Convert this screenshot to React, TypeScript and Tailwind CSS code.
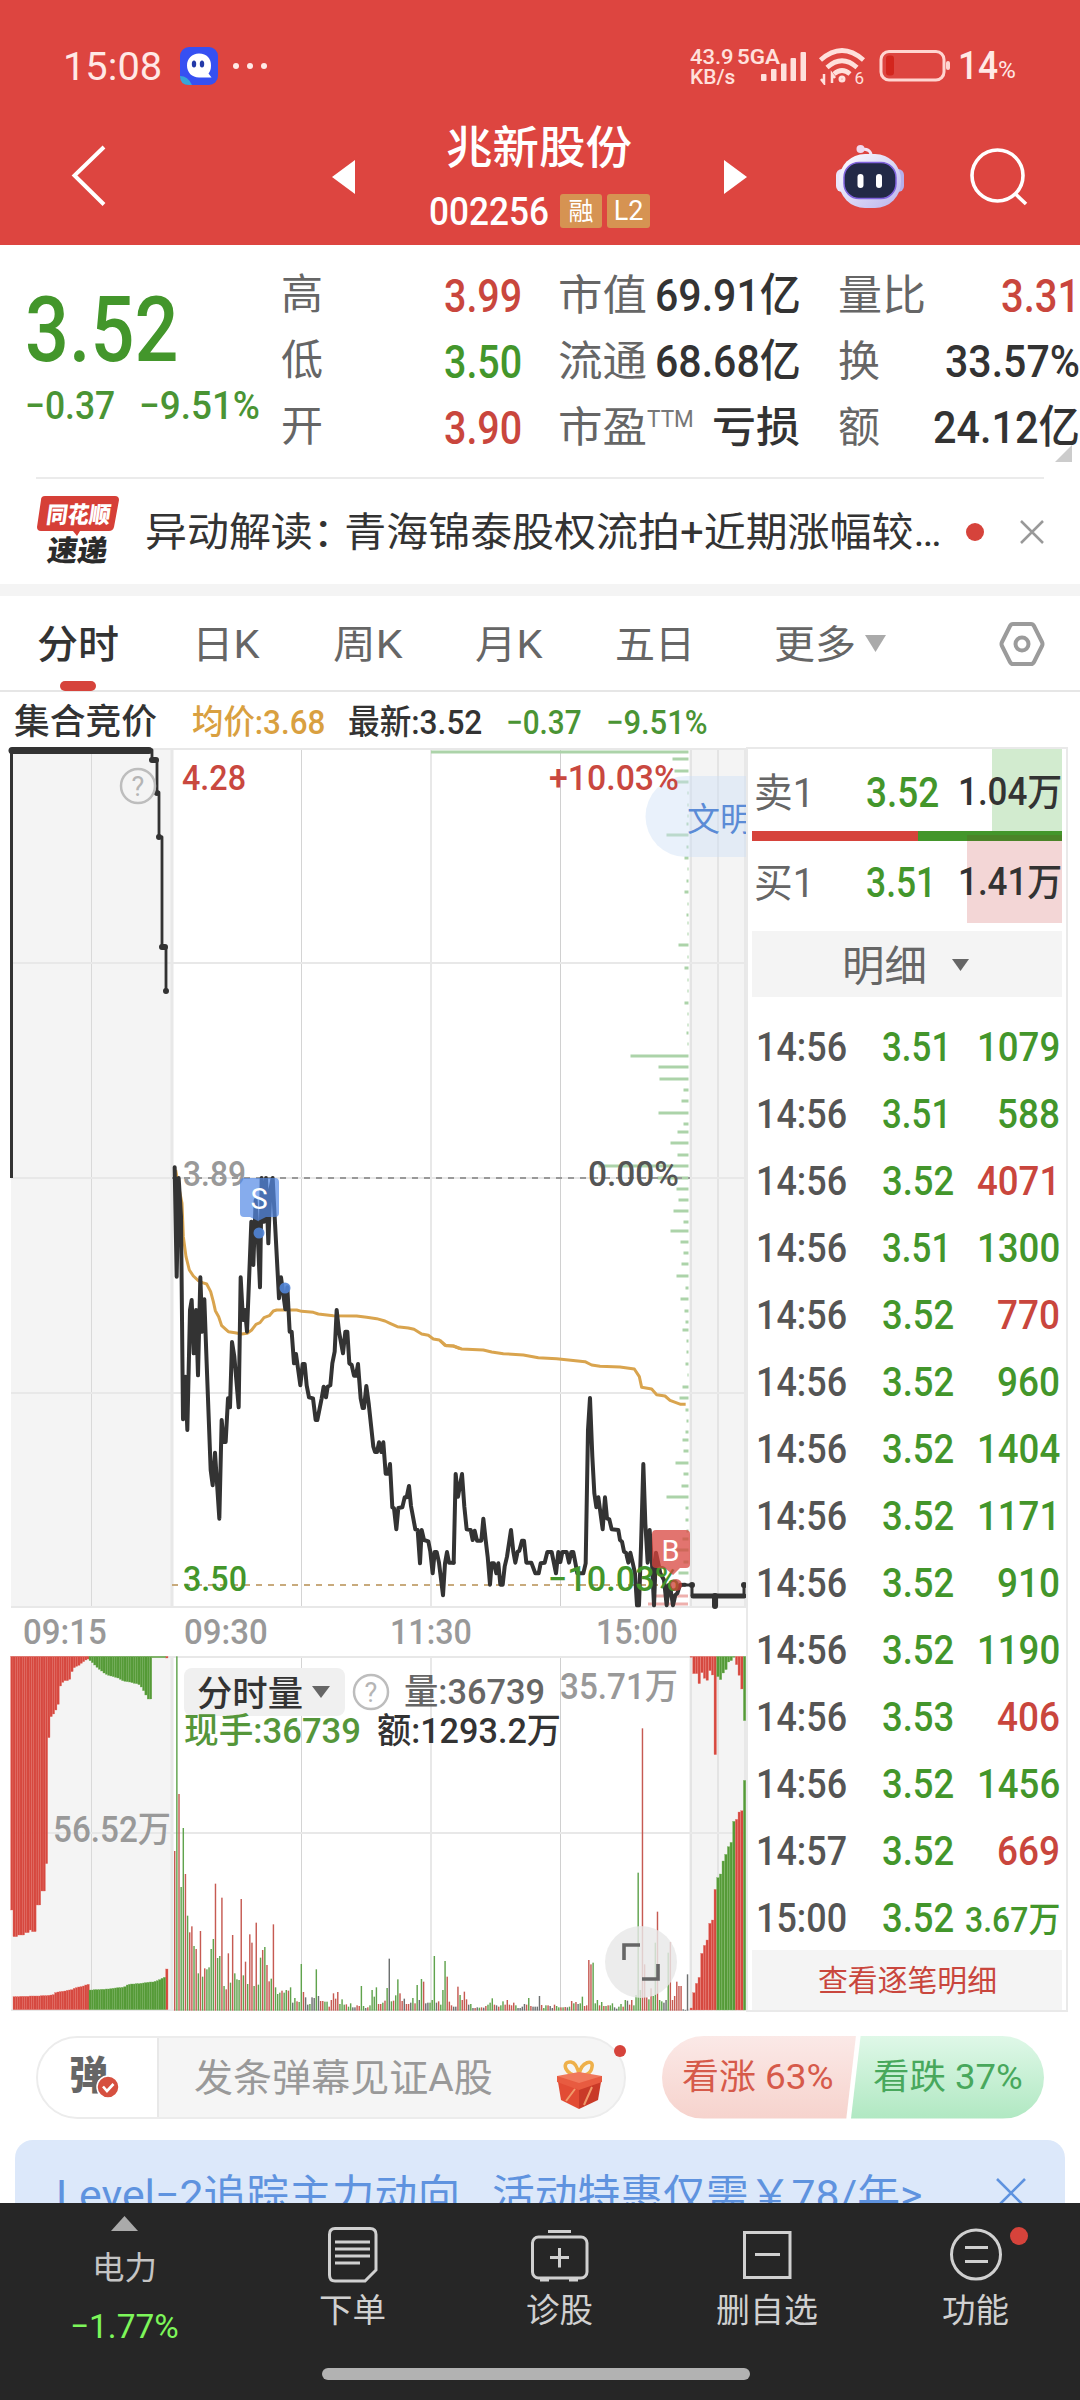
import { useLayoutEffect, useRef, type ReactNode } from "react";

/* Text condensed or widened horizontally so that it fills its own box. */
function Fit({ className, children }: { className: string; children: ReactNode }) {
  const outer = useRef<HTMLSpanElement>(null);
  const inner = useRef<HTMLSpanElement>(null);
  useLayoutEffect(() => {
    const o = outer.current;
    const i = inner.current;
    if (!o || !i) return;
    i.style.transform = `scaleX(${o.clientWidth / i.offsetWidth})`;
  }, []);
  return (
    <span ref={outer} className={`flex shrink-0 items-center whitespace-nowrap pt-[2px] leading-[1.15] ${className}`}>
      <span ref={inner} className="block w-max shrink-0 origin-left">
        {children}
      </span>
    </span>
  );
}

function T({ x, y, w, s, c, m, children }: { x: number; y: number; w: number; s: number; c: string; m?: boolean; children: string }) {
  return (
    <text x={x} y={y} fontSize={s} fill={c} textLength={w} lengthAdjust="spacingAndGlyphs" fontWeight={m ? 500 : 400}>
      {children}
    </text>
  );
}

const GREEN = "#43962b";

const priceA =
  "44,52 50,380 56,84 63,200 69,808 76,680 82,840 90,480 95,450 101,610 108,480 114,676 121,382 127,545 133,448 140,640 152,960 158,1006 165,908 178,1106 185,810 191,876 197,876 204,745 210,772 216,576 223,620 236,772 242,382 249,510 255,480 261,545 274,215 280,345 287,150 293,250 300,412 305,84 312,215 318,84 325,280 331,120 338,84 344,200 357,445 363,382 376,478 382,412 389,545 395,545 402,640 408,612 421,706 428,642 434,642 440,706 447,742 459,745 467,810 472,810 485,745 491,710 498,742 503,710 511,706 517,640 524,605 530,480 537,545 549,610 556,545 562,545 568,640 575,645 582,677 588,677 594,642 602,745 608,774 612,774 619,708 626,760 640,890 645,906 651,906 657,877 664,906 670,877 677,971 685,971 690,942 697,1072 702,1075 709,1138 715,1074 727,1072 734,1042 740,1042 747,1008 753,1068 766,1138 773,1140 780,1240 785,1140 792,1170 805,1174 811,1205 818,1270 824,1206 830,1206 837,1238 849,1336 855,1240 861,1206 867,1238 881,1238";
const priceB =
  "41,848 47,582 54,650 66,582 73,680 80,748 92,750 98,780 104,752 111,782 124,782 130,716 137,780 143,830 150,914 155,850 162,850 169,880 175,850 181,914 188,914 194,860 201,830 213,750 220,815 226,848 233,815 238,812 246,782 252,782 259,848 274,848 286,880 296,880 302,850 314,848 322,816 335,816 348,880 355,816 361,846 367,816 380,816 387,848 394,816 400,816 406,848 412,880 430,880 437,850 444,450 450,354 457,530 463,640 469,682 475,652 488,748 495,652 501,715 508,718 515,748 535,750 540,780 546,785 552,815 558,818 565,848 571,818 578,848 585,880 591,976 597,976 603,800 610,552 616,730 623,848 629,750 636,850 642,976 648,818 655,850 661,880 672,900 680,976 686,915 692,930 699,976 706,945 712,940 720,915 735,914";
const avgA =
  "47,60 56,110 66,160 70,260 78,320 88,360 100,378 115,392 127,398 140,402 152,425 160,455 166,482 176,500 185,527 205,545 225,548 245,552 262,550 275,540 288,523 300,518 312,503 328,497 340,483 350,480 410,480 425,484 460,487 475,492 520,497 590,498 620,502 650,506 675,513 690,520 712,530 745,534 762,538 785,552 805,556 820,567 838,570 855,586 880,588 900,596";
const avgB =
  "60,206 18,197";
const avgC =
  "0,181 18,197 40,198 65,207 130,210 155,216 190,221 250,225 295,233 350,236 435,245 455,255 480,259 540,261 583,267 598,290 605,322 635,327 650,344 675,348 690,361 722,373 737,373";

/* Volume by price: [y, bar length] */
const profile: [number, number][] = [
  [759, 16], [771, 14], [782, 14], [793, 1], [805, 1], [816, 1], [824, 2], [835, 22], [847, 2], [858, 4], [869, 1],
  [881, 2], [892, 4], [904, 1], [915, 2], [923, 1], [934, 1], [945, 10], [957, 1], [968, 4], [980, 1], [991, 1],
  [1003, 4], [1014, 1], [1025, 1], [1033, 2], [1044, 1], [1056, 58], [1067, 30], [1079, 29], [1090, 5], [1101, 7],
  [1113, 30], [1124, 5], [1132, 11], [1143, 18], [1155, 11], [1166, 90], [1178, 31], [1189, 12], [1200, 10], [1211, 15],
  [1222, 5], [1231, 18], [1242, 8], [1253, 5], [1264, 7], [1276, 12], [1288, 3], [1299, 8], [1311, 4], [1322, 3],
  [1330, 6], [1341, 2], [1352, 2], [1364, 3], [1375, 1], [1387, 6], [1398, 9], [1410, 3], [1421, 2], [1432, 3],
  [1440, 6], [1451, 5], [1463, 13], [1474, 5], [1486, 7], [1497, 22], [1508, 3], [1520, 3], [1531, 2], [1539, 6],
  [1550, 12], [1562, 5], [1573, 10],
];

/* Minute volume: colour letter followed by the bar's top edge, in thirds of a pixel */
const volume =
  "r633 g49 r462 g741 g564 r702 g827 r877 r859 g918 r927 g1000 r873 g1010 r985 g988 g982 g927 g897 r731 g954 g948 r773 g1038 r1048 r940 g1028 r885 g1000 g1018 g1020 r777 g1006 r965 g1032 r883 r908 g1038 r848 g1034 g953 r930 g921 r975 r1024 g1016 r853 g1042 g1062 g1058 r1052 g1058 g1050 r1052 g1042 k1088 g1074 r1084 g1086 g972 r1056 k1072 k1094 g1092 k1072 k1074 g988 k1068 r1083 r1083 g1085 g1085 r1100 r1080 r1060 r1076 r1056 g1092 g1078 g1094 r1093 g1100 g1090 k1102 k1102 r1096 r1098 g1038 g1098 k1104 r1102 g1096 g1050 g1070 g1042 r1092 r1092 g1088 r1082 g1044 k956 g1084 r1082 g1066 g1018 r1060 r1083 k1076 r1092 r1092 k1088 g1074 r1090 g1035 k1080 g1017 r1025 k1090 k1088 g1088 g1080 g948 k1088 r1084 g1094 g1050 g963 r1010 r1085 r1096 k1100 k1100 r1040 g1065 r1080 r1055 r1078 k1094 g1092 k1104 r1104 k1102 g1103 r1102 k1103 r1098 g1094 g1088 g1075 r1094 k1096 r1100 g1096 g1084 r1094 r1080 r1094 r1096 r1088 g1096 k1104 k1104 k1100 k1092 r1094 g1074 r1098 k1100 k1100 k1100 k1068 r1095 g1104 g1096 r1096 k1098 k1104 r1094 g1098 g1102 r1102 g1102 r1101 k1102 g1100 r1083 g1090 r1086 k1092 g1090 g1070 r1098 r1096 r960 r973 g968 g1090 g1080 r1096 g1086 r1098 g1098 r1096 g1096 g1090 k1102 k1106 g1100 g1092 r1100 g1080 k1082 r1094 r1080 g1096 g1065 g698 g1050 r265 r973 r1072 g1078 r1045 g1068 g908 r815 g1080 g1084 k1088 k1080 g938 r906 r1080 r1068 r1025 r1038 r1038 k1108 k1110 k1003".split(" ");

const volColor: Record<string, string> = { r: "#c65a52", g: "#60a34d", k: "#6d7070" };

const redTop = [810, 890, 890, 885, 885, 885, 878, 878, 870, 875, 875, 795, 795, 753, 753, 671, 293, 230, 222, 210, 193, 138, 127, 122, 122, 118, 95, 83, 79, 76, 70, 65, 60, 57];
const greenTop = [62, 68, 75, 82, 88, 93, 99, 103, 106, 108, 110, 112, 114, 118, 122, 124, 125, 126, 128, 130, 131, 134, 141, 152, 165, 177, 177];
const redBot = [1070, 1070, 1070, 1069, 1069, 1069, 1069, 1068, 1068, 1068, 1068, 1068, 1067, 1067, 1067, 1066, 1065, 1064, 1058, 1056, 1055, 1054, 1053, 1051, 1050, 1049, 1045, 1043, 1041, 1040, 1038, 1035, 1033];
const greenBot = [1050, 1050, 1049, 1049, 1049, 1048, 1048, 1047, 1047, 1046, 1045, 1044, 1043, 1043, 1042, 1040, 1035, 1033, 1032, 1032, 1031, 1031, 1030, 1029, 1028, 1027, 1026, 1026, 1024, 1022, 1019, 1015, 1012];
const endTop: [string, number][] = [["r", 52], ["r", 101], ["r", 101], ["r", 131], ["r", 98], ["r", 115], ["r", 121], ["r", 92], ["r", 105], ["r", 344], ["g", 110], ["g", 119], ["g", 99], ["g", 89], ["g", 66], ["g", 62], ["g", 52], ["r", 74], ["r", 106], ["r", 147], ["g", 242]];
const endBot: [string, number][] = [["r", 1104], ["r", 1058], ["r", 1030], ["r", 1012], ["r", 940], ["r", 916], ["r", 900], ["r", 850], ["r", 840], ["r", 748], ["g", 713], ["g", 702], ["g", 663], ["g", 643], ["g", 620], ["g", 607], ["g", 544], ["r", 538], ["r", 516], ["r", 512], ["g", 421]];

function Grid({ top, mid, bottom }: { top: number; mid: number[]; bottom: number }) {
  return (
    <g>
      <rect x="11" y={top} width="161" height={bottom - top} fill="#f4f4f4" />
      <rect x="689" y={top} width="57" height={bottom - top} fill="#f4f4f4" />
      <rect x="91" y={top} width="1" height={bottom - top} fill="#d9d9d9" />
      <rect x="170.5" y={top} width="3" height={bottom - top} fill="#e8e8e8" />
      <rect x="301" y={top} width="1" height={bottom - top} fill="#d4d4d4" />
      <rect x="430" y={top} width="2" height={bottom - top} fill="#e8e8e8" />
      <rect x="560" y={top} width="1" height={bottom - top} fill="#d0d0d0" />
      <rect x="690" y={top} width="2" height={bottom - top} fill="#e4e4e4" />
      <rect x="717" y={top} width="2" height={bottom - top} fill="#e4e4e4" />
      <rect x="744" y={top} width="2" height={bottom - top} fill="#e8e8e8" />
      <rect x="11" y={top} width="735" height="2" fill="#e8e8e8" />
      {mid.map((y) => (
        <rect key={y} x="11" y={y - 1} width="735" height="2" fill="#e8e8e8" />
      ))}
      <rect x="11" y={bottom - 2} width="735" height="2" fill="#e8e8e8" />
    </g>
  );
}

function Help({ x, y }: { x: number; y: number }) {
  return (
    <g>
      <circle cx={x} cy={y} r="17" fill="none" stroke="#bdbdbd" strokeWidth="2.5" />
      <text x={x} y={y + 10} fontSize="27" textAnchor="middle" fill="#b5b5b5">?</text>
    </g>
  );
}

function PriceChart() {
  return (
    <svg className="block h-[868px] w-[746px]" viewBox="0 742 746 868">
      <Grid top={748} mid={[963, 1178, 1393]} bottom={1608} />
      <g fill="#acd3a9">
        <rect x="431" y="750.5" width="257.5" height="3" />
        {profile.map(([y, w]) => (
          <rect key={y} x={688.5 - w} y={y - 1.5} width={w} height="3" />
        ))}
      </g>
      <g fill="#eeb0ad">
        <rect x="656" y="1594.500" width="32" height="3" />
        <rect x="648" y="1602.500" width="40" height="3" />
      </g>
      <path d="M172 1178H690" stroke="#999" strokeWidth="2" strokeDasharray="6 6" />
      <path d="M172 1585H690" stroke="#c8aa7c" strokeWidth="2" strokeDasharray="6 6" />
      <path d="M746 776H686a40.500 40.500 0 0 0 0 81H746Z" fill="#cfe1f7" fillOpacity=".45" />
      <text x="687" y="831" fontSize="33" fill="#5b8bd6">文明</text>

      <g fill="none" stroke="#333" strokeLinejoin="round" strokeLinecap="round">
        <path d="M11.500 1178V750" strokeWidth="3" strokeLinecap="butt" />
        <path d="M12 750.500H149" strokeWidth="7" />
        <path d="M152 750V760H157V792.500H159V837H162V947H166V991" strokeWidth="2.800" />
        <path d="M152 760h4M157 793v.01M159 837v.01M162 947h3M166 991v.01" strokeWidth="6" />
      </g>
      <Help x={138} y={786} />

      <g fill="none" stroke="#d9a44e" strokeWidth="9" strokeLinejoin="round">
        <polyline points={avgA} transform="translate(160 1150) scale(.33333)" />
        <polyline points={avgC} transform="translate(440 1280) scale(.33333)" />
      </g>
      <T x={183} y={1186} w={63} s={35} c="#999" m>3.89</T>
      <T x={588} y={1186} w={91} s={35} c="#555" m>0.00%</T>
      <g fill="none" stroke="#333" strokeWidth="12" strokeLinejoin="round" strokeLinecap="round">
        <polyline points={priceA} transform="translate(160 1150) scale(.33333)" />
        <polyline points={priceB} transform="translate(440 1280) scale(.33333)" />
      </g>
      <g fill="none" stroke="#333" strokeLinecap="round">
        <path d="M685 1585H692V1595M744 1595V1585" strokeWidth="3" />
        <path d="M693 1596H744" strokeWidth="5" />
        <path d="M715 1596V1606M692 1585v.01M744 1585v.01" strokeWidth="6" />
      </g>

      <path d="M244 1178H275q4 0 4 4V1213q0 4-4 4H266l-8 4-8-4H244q-4 0-4-4V1182q0-4 4-4Z" fill="#5289e6" fillOpacity=".7" />
      <text x="259" y="1208.500" fontSize="29" textAnchor="middle" fill="#fff">S</text>
      <circle cx="259" cy="1233" r="5.500" fill="#5084d6" fillOpacity=".9" />
      <circle cx="285" cy="1288" r="5.500" fill="#5084d6" fillOpacity=".9" />

      <T x={182} y={790} w={64} s={35} c="#c9483f" m>4.28</T>
      <T x={549} y={790} w={130} s={35} c="#c9483f" m>+10.03%</T>
      <T x={183} y={1591} w={64} s={35} c={GREEN} m>3.50</T>
      <T x={548} y={1591} w={132} s={35} c={GREEN} m>−10.03%</T>

      <path d="M656 1530H686q4 0 4 4V1564q0 4-4 4H680l-7 7-8-7H656q-4 0-4-4V1534q0-4 4-4Z" fill="#d8443d" fillOpacity=".74" />
      <text x="670.500" y="1560.500" fontSize="29" textAnchor="middle" fill="#fff">B</text>
      <circle cx="676" cy="1585" r="6" fill="#cc3e36" fillOpacity=".75" />
    </svg>
  );
}

function VolumeChart() {
  return (
    <svg className="block h-[360px] w-[746px]" viewBox="0 1654 746 360">
      <Grid top={1656} mid={[1833]} bottom={2011} />
      <g transform="translate(0 1640) scale(.33333)" strokeWidth="1">
        <g fill="#d6483f" stroke="#e37068">
          {redTop.map((v, i) => <rect key={i} x={32 + i * 6.94} y="49" width="6.940" height={v - 49} />)}
          {redBot.map((v, i) => <rect key={i} x={39 + i * 6.94} y={v} width="6.940" height={1109 - v} />)}
          <rect x="497" y="49" width="7" height="5" />
          <rect x="497" y="987" width="7" height="122" />
        </g>
        <g fill="#559a37" stroke="#76b05d">
          {greenTop.map((v, i) => <rect key={i} x={267 + i * 6.98} y="49" width="6.980" height={v - 49} />)}
          {greenBot.map((v, i) => <rect key={i} x={267 + i * 6.97} y={v} width="6.970" height={1109 - v} />)}
          <rect x="455" y="49" width="42" height="4" />
        </g>
      </g>
      <g transform="translate(0 1640) scale(.33333)">
        {volume.map((v, i) => {
          const y = Number(v.slice(1));
          return <rect key={i} x={522 + i * 6.437} y={y} width="4.300" height={1112 - y} fill={volColor[v[0]]} />;
        })}
      </g>
      <g transform="translate(370 1640) scale(.33333)" strokeWidth="1">
        {endTop.map(([c, v], i) => (
          <rect key={i} x={960 + i * 8} y="49" width="7.500" height={v - 49} fill={c === "r" ? "#d6483f" : "#559a37"} stroke={c === "r" ? "#e9817a" : "#82b96b"} />
        ))}
        {endBot.map(([c, v], i) => (
          <rect key={i} x={960 + i * 8} y={v} width="7.500" height={1110 - v} fill={c === "r" ? "#d6483f" : "#559a37"} stroke={c === "r" ? "#e9817a" : "#82b96b"} />
        ))}
      </g>
      <T x={53} y={1842} w={118} s={36} c="#999" m>56.52万</T>
      <rect x="184" y="1668" width="161" height="48" rx="8" fill="#f0f0f0" />
      <T x={197} y={1706} w={106} s={35} c="#333" m>分时量</T>
      <path d="M312 1686H330L321 1698Z" fill="#666" />
      <Help x={371} y={1692} />
      <T x={404} y={1704} w={141} s={35} c="#666" m>量:36739</T>
      <T x={560} y={1699} w={118} s={36} c="#999" m>35.71万</T>
      <T x={184} y={1743} w={177} s={35} c="#55963a" m>现手:36739</T>
      <T x={377} y={1743} w={184} s={35} c="#333" m>额:1293.2万</T>
      <circle cx="641" cy="1962" r="36" fill="#e8e8e8" fillOpacity=".82" />
      <path d="M624 1960V1945H640M642 1979H658V1964" fill="none" stroke="#666" strokeWidth="3.600" />
    </svg>
  );
}

const trades: [string, string, string, "r" | "g"][] = [
  ["14:56", "3.51", "1079", "g"],
  ["14:56", "3.51", "588", "g"],
  ["14:56", "3.52", "4071", "r"],
  ["14:56", "3.51", "1300", "g"],
  ["14:56", "3.52", "770", "r"],
  ["14:56", "3.52", "960", "g"],
  ["14:56", "3.52", "1404", "g"],
  ["14:56", "3.52", "1171", "g"],
  ["14:56", "3.52", "910", "g"],
  ["14:56", "3.52", "1190", "g"],
  ["14:56", "3.53", "406", "r"],
  ["14:56", "3.52", "1456", "g"],
  ["14:57", "3.52", "669", "r"],
  ["15:00", "3.52", "3.67万", "g"],
];

function OrderPanel() {
  return (
    <section className="relative flex h-[1265px] w-[322px] flex-col border-2 border-[#e9e9e9] bg-white">
      <div className="flex h-[82px] items-center">
        <Fit className="ml-[6px] mt-[6px] w-[60px] text-[40px] text-[#666]">卖1</Fit>
        <Fit className="ml-[52px] mt-[4px] w-[73px] text-[42px] font-medium text-[#43962b]">3.52</Fit>
        <div className="ml-auto mr-[4px] flex h-full w-[70px] items-center justify-end bg-[#d2ebcf] pt-[4px]">
          <Fit className="w-[104px] text-[38px] font-medium text-[#333]">1.04万</Fit>
        </div>
      </div>
      <div className="ml-[4px] flex h-[10px] w-[310px]">
        <div className="w-[166px] bg-[#d6433b]" />
        <div className="w-[49px] bg-[#43962b]" />
        <div className="w-[95px] border-t-4 border-[#43962b] bg-[#4b8428]" />
      </div>
      <div className="flex h-[83px] items-center">
        <Fit className="ml-[6px] mt-[2px] w-[60px] text-[40px] text-[#666]">买1</Fit>
        <Fit className="ml-[52px] w-[70px] text-[42px] font-medium text-[#43962b]">3.51</Fit>
        <div className="ml-auto mr-[4px] flex h-full w-[95px] items-center justify-end bg-[#f3d6d6]">
          <Fit className="w-[104px] text-[38px] font-medium text-[#333]">1.41万</Fit>
        </div>
      </div>
      <div className="ml-[4px] mt-[8px] flex h-[66px] w-[310px] items-center bg-[#f4f4f4]">
        <Fit className="ml-[90px] mt-[4px] w-[85px] text-[42px] text-[#666]">明细</Fit>
        <svg className="ml-[25px] mt-[2px] h-[12px] w-[17px]" viewBox="0 0 17 12"><path d="M0 0H17L8.500 12Z" fill="#666" /></svg>
      </div>
      <div className="mt-[15px]">
        {trades.map(([t, p, q, c], i) => (
          <div key={i} className="flex h-[67px] items-center pt-[2px]">
            <Fit className="ml-[8px] w-[91px] text-[41px] font-medium text-[#555]">{t}</Fit>
            <span className="ml-[35px] w-[73px]">
              {p.endsWith("1") ? (
                <Fit className="w-[69px] text-[41px] font-medium text-[#43962b]">{p}</Fit>
              ) : (
                <Fit className="w-[72px] text-[41px] font-medium text-[#43962b]">{p}</Fit>
              )}
            </span>
            <span className={`ml-auto mr-[6px] flex ${c === "r" ? "text-[#c9463d]" : "text-[#43962b]"}`}>
              {q.length === 3 ? (
                <Fit className="w-[63px] text-[41px] font-medium">{q}</Fit>
              ) : q.length === 4 ? (
                <Fit className="w-[83px] text-[41px] font-medium">{q}</Fit>
              ) : (
                <Fit className="mt-[4px] w-[95px] text-[35px] font-medium">{q}</Fit>
              )}
            </span>
          </div>
        ))}
      </div>
      <div className="ml-[4px] flex h-[60px] w-[310px] items-center justify-center bg-[#f4f4f4]">
        <Fit className="w-[179px] text-[30px] text-[#c9463d]">查看逐笔明细</Fit>
      </div>
    </section>
  );
}

function Header() {
  return (
    <header className="h-[245px] bg-[#dd4540] text-white">
      <div className="flex h-[108px] items-center pt-[24px]">
        <Fit className="ml-[63px] w-[99px] text-[39px] text-[#ffe9e6]">15:08</Fit>
        <svg className="ml-[18px] h-[38px] w-[38px]" viewBox="0 0 38 38">
          <rect width="38" height="38" rx="9" fill="#3650f2" />
          <path d="M0 29Q8 29 12 38H9Q0 38 0 29Z" fill="#37a6d8" />
          <path d="M19 6.500c8 0 12 5 12 12 0 4-1 6-2.500 8l3 4H19c-7 0-12-5-12-12S12 6.500 19 6.500Z" fill="#fff" />
          <ellipse cx="14" cy="17" rx="2.200" ry="3.600" fill="#2339a8" />
          <ellipse cx="22" cy="17" rx="2.200" ry="3.600" fill="#2339a8" />
        </svg>
        <div className="ml-[15px] flex gap-[8px]">
          <i className="size-[6px] rounded-full bg-[#ffe9e6]" />
          <i className="size-[6px] rounded-full bg-[#ffe9e6]" />
          <i className="size-[6px] rounded-full bg-[#ffe9e6]" />
        </div>
        <div className="ml-[423px] flex flex-col text-[#ffe0dc]">
          <Fit className="h-[20px] w-[44px] text-[21px] font-medium">43.9</Fit>
          <Fit className="h-[20px] w-[45px] text-[20px] font-medium">KB/s</Fit>
        </div>
        <div className="ml-[1px] flex w-[72px] items-center">
          <svg className="h-[38px] w-[72px]" viewBox="735 47 72 38" fill="#ffe0dc">
            <text x="736" y="63.500" fontSize="20" fontWeight="600" textLength="43" lengthAdjust="spacingAndGlyphs">5GA</text>
            <rect x="760" y="74" width="5.500" height="7" rx="1" />
            <rect x="770" y="69" width="5.500" height="12" rx="1" />
            <rect x="780" y="63.500" width="5.500" height="17.500" rx="1" />
            <rect x="789.500" y="58" width="5.500" height="23" rx="1" />
            <rect x="799.500" y="52" width="5.500" height="29" rx="1" />
          </svg>
        </div>
        <svg className="ml-[10px] h-[38px] w-[48px]" viewBox="817 47 48 38" fill="none" stroke="#ffe0dc" strokeWidth="4.600">
          <path d="M819.500 60Q841 41 862.500 60M826 67.500Q841 54 856 67.500M833 74Q841 67 849 74" />
          <circle cx="841" cy="79" r="2" strokeWidth="3" />
          <path d="M823 74v9l-3-4M831 83v-9l3 4" strokeWidth="2.500" />
          <text x="853.500" y="83.500" fontSize="17" fill="#ffe0dc" stroke="none">6</text>
        </svg>
        <svg className="ml-[12px] h-[36px] w-[74px]" viewBox="877 48 74 36">
          <rect x="880" y="51.500" width="63" height="28.500" rx="8" fill="none" stroke="#ffd5d0" strokeWidth="3" />
          <rect x="885" y="55.500" width="8" height="20" rx="3" fill="#d3251d" />
          <rect x="945" y="61" width="4" height="9" rx="2" fill="#ffd5d0" />
        </svg>
        <Fit className="ml-[6px] w-[40px] text-[38px] font-medium text-[#ffe9e6]">14</Fit>
        <Fit className="mt-[8px] w-[18px] text-[23px] text-[#ffe9e6]">%</Fit>
      </div>
      <div className="flex h-[137px] items-center">
        <svg className="ml-[70px] h-[64px] w-[38px]" viewBox="0 0 38 64"><path d="M34 2 4.500 30.500 34 59.500" fill="none" stroke="#fff" strokeWidth="4" /></svg>
        <svg className="ml-[224px] h-[34px] w-[23px]" viewBox="0 0 23 34"><path d="M23 0V34L0 17Z" fill="#fff" /></svg>
        <div className="ml-[73px] h-full w-[224px]">
          <div className="flex h-[77px] items-center justify-center">
            <Fit className="mr-[2px] mt-[2px] w-[186px] text-[45px] font-medium">兆新股份</Fit>
          </div>
          <div className="flex h-[52px] items-center">
            <Fit className="ml-[1px] w-[120px] text-[39px] font-medium">002256</Fit>
            <span className="ml-[11px] flex h-[34px] w-[42px] items-center justify-center rounded-[3px] bg-[#d69352] pt-[1px] text-[25px] leading-none">融</span>
            <span className="ml-[5px] flex h-[34px] w-[43px] items-center justify-center rounded-[3px] bg-[#d69352] pt-[1px] text-[27px] leading-none">L2</span>
          </div>
        </div>
        <svg className="ml-[72px] h-[34px] w-[23px]" viewBox="0 0 23 34"><path d="M0 0V34L23 17Z" fill="#fff" /></svg>
        <svg className="ml-[88px] h-[66px] w-[70px]" viewBox="835 143 70 66">
          <defs>
            <linearGradient id="robot" x1="0" y1="0" x2="1" y2="1">
              <stop offset="0" stopColor="#ffffff" />
              <stop offset="1" stopColor="#b9b3ec" />
            </linearGradient>
          </defs>
          <path d="M871 156Q872 148 862 148" fill="none" stroke="#f3e3f5" strokeWidth="3" />
          <circle cx="860.500" cy="148" r="4" fill="#f0d9ee" />
          <rect x="836" y="168" width="13" height="23" rx="6" fill="#e9e6fb" />
          <rect x="891" y="168" width="13" height="23" rx="6" fill="#b5aeea" />
          <rect x="839" y="153" width="62" height="54" rx="26" fill="url(#robot)" />
          <rect x="844" y="161.500" width="52" height="36" rx="15" fill="#222946" stroke="#7f62dc" strokeWidth="1.500" />
          <rect x="857.500" y="173" width="6" height="14" rx="3" fill="#fff" />
          <rect x="876" y="173" width="6" height="14" rx="3" fill="#fff" />
        </svg>
        <svg className="ml-[64px] h-[60px] w-[60px]" viewBox="969 147 60 60" fill="none" stroke="#fff" strokeWidth="3.600">
          <circle cx="997.500" cy="175.500" r="25.500" />
          <path d="M1015 193.500 1026 204" />
        </svg>
      </div>
    </header>
  );
}

function Stats() {
  return (
    <section className="relative flex h-[232px] pt-[17px]">
      <div className="ml-[25px] w-[256px]">
        <Fit className="mt-[22px] h-[92px] w-[153px] text-[90px] font-medium text-[#43962b]">3.52</Fit>
        <div className="mt-[6px] flex h-[46px] items-center font-medium text-[#4a9434]">
          <Fit className="w-[90px] text-[39px]">−0.37</Fit>
          <Fit className="ml-[24px] w-[121px] text-[39px]">−9.51%</Fit>
        </div>
      </div>
      <div className="w-[277px]">
        <div className="flex h-[66px] items-center"><span className="w-[163px] text-[42px] leading-none text-[#666]">高</span><Fit className="w-[78px] text-[46px] font-medium text-[#c9463d]">3.99</Fit></div>
        <div className="flex h-[66px] items-center"><span className="w-[163px] text-[42px] leading-none text-[#666]">低</span><Fit className="w-[78px] text-[46px] font-medium text-[#43962b]">3.50</Fit></div>
        <div className="flex h-[66px] items-center"><span className="w-[163px] text-[42px] leading-none text-[#666]">开</span><Fit className="w-[78px] text-[46px] font-medium text-[#c9463d]">3.90</Fit></div>
      </div>
      <div className="w-[280px] text-[#333]">
        <div className="flex h-[66px] items-center"><Fit className="w-[89px] text-[42px] text-[#666]">市值</Fit><Fit className="ml-[8px] w-[146px] text-[45px] font-medium">69.91亿</Fit></div>
        <div className="flex h-[66px] items-center"><Fit className="w-[89px] text-[42px] text-[#666]">流通</Fit><Fit className="ml-[8px] w-[146px] text-[45px] font-medium">68.68亿</Fit></div>
        <div className="flex h-[66px] items-center"><Fit className="w-[89px] text-[42px] text-[#666]">市盈</Fit><Fit className="mb-[17px] w-[47px] text-[24px] text-[#777]">TTM</Fit><Fit className="ml-[18px] w-[88px] text-[42px] font-medium">亏损</Fit></div>
      </div>
      <div className="w-[242px] text-[#333]">
        <div className="flex h-[66px] items-center justify-between"><Fit className="w-[88px] text-[42px] text-[#666]">量比</Fit><Fit className="w-[79px] text-[46px] font-medium text-[#c9463d]">3.31</Fit></div>
        <div className="flex h-[66px] items-center justify-between"><Fit className="w-[42px] text-[42px] text-[#666]">换</Fit><Fit className="w-[135px] text-[45px] font-medium">33.57%</Fit></div>
        <div className="flex h-[66px] items-center justify-between"><Fit className="w-[42px] text-[42px] text-[#666]">额</Fit><Fit className="w-[147px] text-[45px] font-medium">24.12亿</Fit></div>
      </div>
      <svg className="absolute bottom-[15px] right-[8px] h-[17px] w-[17px]" viewBox="0 0 17 17"><path d="M17 0V17H0Z" fill="#ccc" /></svg>
    </section>
  );
}

function News() {
  return (
    <section className="mx-[36px] flex h-[107px] items-center border-t-2 border-[#ebebeb]">
      <svg className="h-[72px] w-[84px]" viewBox="36 496 84 72" fontWeight="900">
        <path d="M45 496H115q4 0 4 4L114 527q-1 4-5 4H80l-3 5-4-5H41q-4 0-4-4L41 500q0-4 4-4Z" fill="#d63f37" />
        <g transform="skewX(-8)">
          <text x="119" y="523" fontSize="23" fill="#fff" textLength="64" lengthAdjust="spacingAndGlyphs">同花顺</text>
          <text x="125" y="561" fontSize="29" fill="#2b2b2b" textLength="60" lengthAdjust="spacingAndGlyphs">速递</text>
        </g>
      </svg>
      <Fit className="ml-[25px] h-[56px] w-[795px] text-[40px] text-[#333]">
        异动解读<span className="tracking-[-10px]">：</span>青海锦泰股权流拍+近期涨幅较<span className="tracking-[-1px]">…</span>
      </Fit>
      <i className="ml-[26px] size-[18px] rounded-full bg-[#d6433b]" />
      <svg className="ml-[36px] h-[24px] w-[24px]" viewBox="0 0 24 24"><path d="M1 1 23 23M23 1 1 23" stroke="#999" strokeWidth="2.500" /></svg>
    </section>
  );
}

function Tabs() {
  return (
    <nav className="relative flex h-[96px] items-center border-b-2 border-[#e6e6e6] pt-[3px] text-[39px] text-[#666]">
      <Fit className="ml-[37px] w-[82px] font-medium text-[#333]">分时</Fit>
      <Fit className="ml-[73px] w-[67px]">日K</Fit>
      <Fit className="ml-[74px] w-[69px]">周K</Fit>
      <Fit className="ml-[73px] w-[67px]">月K</Fit>
      <Fit className="ml-[73px] w-[80px]">五日</Fit>
      <Fit className="ml-[79px] w-[82px]">更多</Fit>
      <svg className="mb-[2px] ml-[9px] h-[17px] w-[21px]" viewBox="0 0 21 17"><path d="M0 0H21L10.500 17Z" fill="#aaa" /></svg>
      <svg className="mb-[2px] ml-[112px] h-[46px] w-[48px]" viewBox="0 0 48 46" fill="none" stroke="#9b9b9b" strokeWidth="4">
        <path d="M15 3H33q2 0 3 2L44 21q1 2 0 4L36 41q-1 2-3 2H15q-2 0-3-2L4 25q-1-2 0-4L12 5q1-2 3-2Z" />
        <circle cx="24" cy="23" r="6.500" />
      </svg>
      <i className="absolute bottom-[-1px] left-[60px] h-[10px] w-[36px] rounded-full bg-[#d6433b]" />
    </nav>
  );
}

function Interact() {
  return (
    <section className="flex h-[104px] items-center pl-[36px]">
      <div className="relative flex h-[83px] w-[590px] items-center overflow-visible rounded-full border-2 border-[#ececec] bg-[#f5f5f5]">
        <div className="flex h-full w-[121px] items-center rounded-l-full border-r-2 border-[#e8e8e8] bg-white pl-[31px]">
          <svg className="h-[50px] w-[54px]" viewBox="70 2053 54 50">
            <text x="70" y="2090" fontSize="39" fontWeight="900" fill="#666">弹</text>
            <circle cx="109" cy="2088" r="11" fill="#d6503f" stroke="#fff" strokeWidth="1.500" />
            <path d="M104 2087.500 108 2092 114.500 2085" fill="none" stroke="#fff" strokeWidth="2.600" />
          </svg>
        </div>
        <Fit className="ml-[35px] mt-[1px] h-[56px] w-[299px] text-[38px] text-[#999]">发条弹幕见证A股</Fit>
        <svg className="ml-[61px] mt-[16px] h-[52px] w-[50px]" viewBox="554 2060 50 52">
          <path d="M579 2076C566 2078 560 2062 571 2063Q577 2064 579 2076C581 2062 594 2060 592 2068 591 2075 585 2077 579 2076Z" fill="none" stroke="#eeb04a" strokeWidth="3.500" />
          <path d="M557 2077 579 2073 602 2077 579 2089Z" fill="#f0785c" />
          <path d="M557 2077 579 2088V2110L561 2101Z" fill="#e24c34" />
          <path d="M602 2077 579 2088V2110L598 2101Z" fill="#c93a28" />
          <path d="M557 2077 579 2084 602 2077V2083L579 2091 557 2083Z" fill="#e85b40" />
          <path d="M566 2102 575 2090M584 2106 592 2088" stroke="#f09a6a" strokeWidth="2" />
        </svg>
        <i className="absolute right-[-2px] top-[7px] size-[12px] rounded-full bg-[#d6433b]" />
      </div>
      <div className="ml-[36px] flex h-[83px] w-[382px] items-center">
        <div className="flex h-full w-[194px] items-center rounded-l-full bg-gradient-to-b from-[#fbe9e7] to-[#f6d3cd] pl-[20px] [clip-path:polygon(0_0,100%_0,95%_100%,0_100%)]">
          <Fit className="w-[152px] text-[35px] text-[#d65a4a]">看涨 63%</Fit>
        </div>
        <div className="-ml-[5px] flex h-full w-[193px] items-center rounded-r-full bg-gradient-to-b from-[#dff8e8] to-[#b0e8c2] pl-[22px] [clip-path:polygon(5%_0,100%_0,100%_100%,0_100%)]">
          <Fit className="w-[150px] text-[35px] text-[#48a85c]">看跌 37%</Fit>
        </div>
      </div>
    </section>
  );
}

function BottomNav() {
  return (
    <nav className="relative h-[197px] bg-[#262626] text-[#d0d0d0]">
      <div className="flex">
        <div className="flex h-[150px] w-[248px] flex-col items-center pt-[13px]">
          <svg className="h-[15px] w-[27px]" viewBox="0 0 27 15"><path d="M13.500 0 27 15H0Z" fill="#aaa" /></svg>
          <Fit className="mt-[17px] h-[38px] w-[65px] text-[32px] text-[#c4c4c4]">电力</Fit>
          <Fit className="mt-[20px] h-[40px] w-[109px] text-[34px] text-[#7df65a]">−1.77%</Fit>
        </div>
        <div className="flex w-[209px] flex-col items-center pt-[22px]">
          <svg className="h-[60px] w-[54px]" viewBox="326 2225 54 60" fill="none" stroke="#d0d0d0" strokeWidth="3">
            <path d="M335 2228.500H370q6 0 6 6V2270L365 2281H335q-5.500 0-5.500-6V2234.500q0-6 5.500-6Z" />
            <path d="M335 2242H370M335 2249H370M335 2256H370M335 2263H360" />
          </svg>
          <Fit className="mt-[5px] h-[40px] w-[67px] text-[33px]">下单</Fit>
        </div>
        <div className="flex w-[205px] flex-col items-center pt-[22px]">
          <svg className="h-[60px] w-[62px]" viewBox="529 2225 62 60" fill="none" stroke="#d0d0d0" strokeWidth="3">
            <rect x="532.500" y="2237" width="54.500" height="41" rx="6" />
            <path d="M548 2231.500H571M550 2257.500H569M559.500 2248V2267.500M540 2280H549M569 2280H578" />
          </svg>
          <Fit className="mt-[5px] h-[40px] w-[67px] text-[33px]">诊股</Fit>
        </div>
        <div className="flex w-[210px] flex-col items-center pt-[22px]">
          <svg className="h-[60px] w-[52px]" viewBox="741 2225 52 60" fill="none" stroke="#d0d0d0" strokeWidth="3">
            <rect x="744.500" y="2232.500" width="45.500" height="45" />
            <path d="M755 2254.500H780" />
          </svg>
          <Fit className="mt-[5px] h-[40px] w-[102px] text-[33px]">删自选</Fit>
        </div>
        <div className="flex w-[207px] flex-col items-center pt-[22px]">
          <svg className="ml-[32px] h-[60px] w-[86px]" viewBox="948 2225 86 60" fill="none" stroke="#d0d0d0" strokeWidth="3">
            <circle cx="975" cy="2254.500" r="24.500" />
            <path d="M964 2247.500H987M964 2261.500H987" />
            <circle cx="1018" cy="2236" r="9" fill="#d6433b" stroke="none" />
          </svg>
          <Fit className="mt-[5px] h-[40px] w-[67px] text-[33px]">功能</Fit>
        </div>
      </div>
      <div className="absolute bottom-[20px] left-[322px] h-[12px] w-[428px] rounded-full bg-[#b2b2b2]" />
    </nav>
  );
}

export default function App() {
  return (
    <div className="flex h-[2400px] w-[1080px] flex-col overflow-hidden bg-white font-[Roboto,'Noto_Sans_CJK_SC',sans-serif]">
      <Header />
      <Stats />
      <News />
      <div className="h-[12px] bg-[#f4f4f4]" />
      <Tabs />
      <div className="flex h-[50px] items-center pt-[10px] text-[34px] font-medium">
        <Fit className="ml-[14px] w-[143px] text-[35px] text-[#333]">集合竞价</Fit>
        <Fit className="ml-[35px] w-[133px] text-[#d9a040]">均价:3.68</Fit>
        <Fit className="ml-[23px] w-[134px] text-[#333]">最新:3.52</Fit>
        <Fit className="ml-[24px] w-[76px] text-[#4a9434]">−0.37</Fit>
        <Fit className="ml-[24px] w-[102px] text-[#4a9434]">−9.51%</Fit>
      </div>
      <main className="flex h-[1272px]">
        <div className="w-[746px]">
          <PriceChart />
          <div className="flex h-[44px] items-center text-[35px] font-medium text-[#999]">
            <Fit className="ml-[23px] w-[84px]">09:15</Fit>
            <Fit className="ml-[77px] w-[84px]">09:30</Fit>
            <Fit className="ml-[122px] w-[82px]">11:30</Fit>
            <Fit className="ml-[124px] w-[82px]">15:00</Fit>
          </div>
          <VolumeChart />
        </div>
        <div className="pt-[5px]">
          <OrderPanel />
        </div>
      </main>
      <div className="mt-[11px]">
        <Interact />
      </div>
      <section className="mx-[15px] mt-[11px] flex h-[63px] items-start overflow-hidden rounded-t-[18px] bg-[#dce8fa] text-[#5f93df]">
        <Fit className="ml-[41px] mt-[30px] h-[50px] w-[866px] text-[41px]">Level−2追踪主力动向&nbsp;&nbsp; 活动特惠仅需￥78/年&gt;</Fit>
        <svg className="ml-[74px] mt-[38px] h-[30px] w-[30px]" viewBox="0 0 30 30"><path d="M1 1 29 29M29 1 1 29" stroke="#5f93df" strokeWidth="2.600" /></svg>
      </section>
      <BottomNav />
    </div>
  );
}
